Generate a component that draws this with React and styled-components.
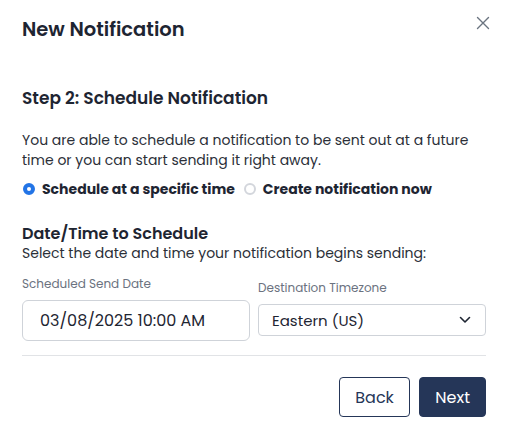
import React, { useState } from 'react';
import styled, { createGlobalStyle } from 'styled-components';

const GlobalStyle = createGlobalStyle`
    html, body {
        margin: 0;
        padding: 0;
        background: #ffffff;
    }
    body {
        font-family: 'Poppins', 'Noto Sans', 'DejaVu Sans', sans-serif;
        color: #1f2533;
    }
    * {
        box-sizing: border-box;
    }
`

const Modal = styled.div`
    width: 509px;
    height: 440px;
    padding: 15px 23px 0 22px;
    display: flex;
    flex-direction: column;
`

const Header = styled.header`
    display: flex;
    justify-content: space-between;
    align-items: flex-start;
    height: 28px;
`

const Title = styled.h1`
    margin: 1px 0 0;
    font-size: 19.5px;
    font-weight: 600;
    line-height: 28px;
    color: #1e2532;
`

const CloseButton = styled.button`
    background: transparent;
    border: 0;
    padding: 0;
    margin: 0 -7px 0 0;
    width: 20px;
    height: 16px;
    display: flex;
    align-items: center;
    justify-content: center;
    cursor: pointer;
`

const StepTitle = styled.h2`
    margin: 43px 0 0;
    font-size: 17px;
    font-weight: 600;
    line-height: 24px;
    color: #1e2532;
`

const Description = styled.p`
    margin: 20px 0 0;
    font-size: 14px;
    line-height: 20px;
    color: #2b2f38;
`

const RadioRow = styled.div`
    display: flex;
    align-items: center;
    gap: 8px;
    margin-top: 9px;
    height: 20px;
`

const RadioLabel = styled.label`
    display: flex;
    align-items: center;
    gap: 7px;
    font-size: 14px;
    font-weight: 700;
    color: #1e2532;
    cursor: pointer;
`

const RadioDot = styled.span`
    width: 12px;
    height: 12px;
    border-radius: 50%;
    margin-left: 1px;
    flex-shrink: 0;
    background: ${props => props.checked ? '#2274e6' : '#ffffff'};
    border: ${props => props.checked ? '4px solid #2274e6' : '2px solid #d3d6dc'};
    position: relative;
    &::after {
        content: '';
        display: ${props => props.checked ? 'block' : 'none'};
        position: absolute;
        left: 0;
        top: 0;
        width: 4px;
        height: 4px;
        border-radius: 50%;
        background: #ffffff;
    }
`

const SectionTitle = styled.h3`
    margin: 26px 0 0;
    font-size: 16px;
    font-weight: 600;
    line-height: 18px;
    color: #1e2532;
`

const SectionHint = styled.p`
    margin: 0;
    font-size: 14px;
    line-height: 20px;
    color: #2b2f38;
`

const Fields = styled.div`
    display: grid;
    grid-template-columns: 228px 228px;
    column-gap: 8px;
    margin-top: 12px;
`

const Field = styled.div`
    display: flex;
    flex-direction: column;
    padding-top: ${props => props.offset || 0}px;
`

const FieldLabel = styled.span`
    font-size: 12px;
    line-height: 18px;
    color: #6b7280;
    margin-bottom: ${props => props.gap}px;
`

const DateInput = styled.div`
    height: 41px;
    border: 1px solid #cfd3d9;
    border-radius: 6px;
    padding: 0 17px;
    display: flex;
    align-items: center;
    font-size: 16px;
    color: #1e2532;
`

const Select = styled.div`
    height: 32px;
    border: 1px solid #cfd3d9;
    border-radius: 4px;
    padding: 0 14px 0 13px;
    display: flex;
    align-items: center;
    justify-content: space-between;
    font-size: 15px;
    color: #1e2532;
`

const Divider = styled.hr`
    border: 0;
    border-top: 1px solid #e1e3e6;
    margin: 14px 0 0;
`

const Footer = styled.footer`
    display: flex;
    justify-content: flex-end;
    gap: 9px;
    margin-top: 21px;
`

const Button = styled.button`
    height: 40px;
    padding: 0 ${props => props.primary ? 15 : 15.5}px;
    border-radius: 4px;
    font-family: inherit;
    font-size: 16px;
    cursor: pointer;
    border: 1px solid #253658;
    background: ${props => props.primary ? '#253658' : '#ffffff'};
    color: ${props => props.primary ? '#ffffff' : '#253658'};
`

const CloseIcon = () => (
    <svg width="14" height="14" viewBox="0 0 14 14">
        <path d="M1.5 1.5 L12.5 12.5 M12.5 1.5 L1.5 12.5" stroke="#6b7480" strokeWidth="1.4" strokeLinecap="round" />
    </svg>
)

const Chevron = () => (
    <svg width="12" height="8" viewBox="0 0 12 8">
        <path d="M1.5 1.5 L6 6 L10.5 1.5" fill="none" stroke="#1e2532" strokeWidth="1.6" strokeLinecap="round" strokeLinejoin="round" />
    </svg>
)

const App = () => {
    const [ mode, setMode ] = useState('specific')

    return (
        <Modal>
            <GlobalStyle />
            <Header>
                <Title>New Notification</Title>
                <CloseButton aria-label="Close"><CloseIcon /></CloseButton>
            </Header>

            <StepTitle>Step 2: Schedule Notification</StepTitle>
            <Description>
                You are able to schedule a notification to be sent out at a future time or you can start sending it right away.
            </Description>

            <RadioRow>
                <RadioLabel onClick={() => setMode('specific')}>
                    <RadioDot checked={mode === 'specific'} />
                    Schedule at a specific time
                </RadioLabel>
                <RadioLabel onClick={() => setMode('now')}>
                    <RadioDot checked={mode === 'now'} />
                    Create notification now
                </RadioLabel>
            </RadioRow>

            <SectionTitle>Date/Time to Schedule</SectionTitle>
            <SectionHint>Select the date and time your notification begins sending:</SectionHint>

            <Fields>
                <Field>
                    <FieldLabel gap={7}>Scheduled Send Date</FieldLabel>
                    <DateInput>03/08/2025 10:00 AM</DateInput>
                </Field>
                <Field offset={4}>
                    <FieldLabel gap={7}>Destination Timezone</FieldLabel>
                    <Select>
                        Eastern (US)
                        <Chevron />
                    </Select>
                </Field>
            </Fields>

            <Divider />

            <Footer>
                <Button>Back</Button>
                <Button primary>Next</Button>
            </Footer>
        </Modal>
    );
};

export default App;
